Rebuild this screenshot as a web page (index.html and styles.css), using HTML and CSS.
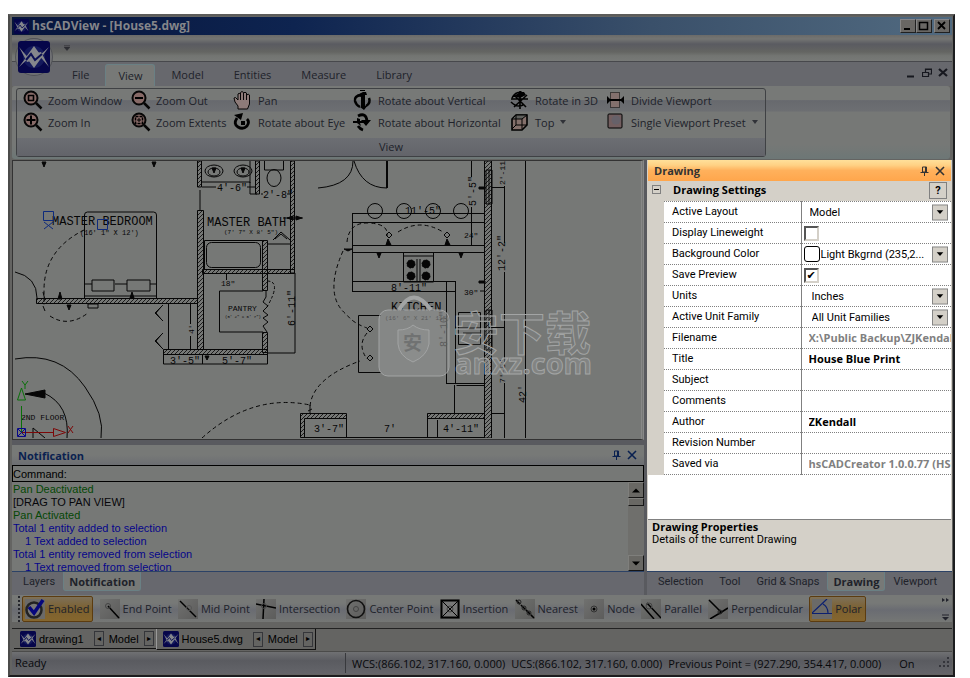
FILE: index.html
```html
<!DOCTYPE html>
<html lang="en">
<head>
  <meta charset="UTF-8">
  <meta name="viewport" content="width=device-width, initial-scale=1.0">
  <title>hsCADView - [House5.dwg]</title>
  <link rel="stylesheet" href="styles.css">
</head>
<body>
  <!-- Shared icons -->
  <svg class="defs" width="0" height="0">
    <symbol id="logo" viewBox="0 0 32 32">
      <rect width="32" height="32" rx="3" fill="#06064a"/>
      <circle cx="16" cy="16" r="11" fill="#14195c"/>
      <path d="M16 5l8 11-8 11-8-11zM1 26L12 11v5zM31 6L20 21v-5zM1 6l12 14-4 1zM31 26L19 12l4-1z" fill="#85878c"/>
      <path d="M8 19l5-6 4 6 7-6" fill="none" stroke="#0c1054" stroke-width="2"/>
    </symbol>
    <symbol id="lens" viewBox="0 0 20 20">
      <circle cx="8" cy="8" r="6.5" fill="#876a67" stroke="#060606" stroke-width="2"/>
      <path d="M13 13l5.500 5.500" stroke="#060606" stroke-width="2.500"/>
    </symbol>
    <symbol id="pin" viewBox="0 0 10 10">
      <path d="M3.500 1h4v5h-4zM6.500 1v5M1.500 6.500h8M5.500 6v4" fill="none" stroke="currentColor"/>
    </symbol>
    <symbol id="cross" viewBox="0 0 10 10">
      <path d="M1 1l8 8M9 1L1 9" stroke="currentColor" stroke-width="1.600"/>
    </symbol>
    <symbol id="down" viewBox="0 0 17 17">
      <rect x=".5" y=".5" width="16" height="16" fill="#d4d0c8" stroke="#808080"/>
      <path d="M5 6h7l-3.500 4z" fill="#000"/>
    </symbol>
  </svg>

  <div class="window">
    <header class="titlebar">
      <svg class="title-logo"><use href="#logo"/></svg>
      <h1>hsCADView - [House5.dwg]</h1>
      <button class="win-btn" aria-label="Minimize"><svg width="12" height="10"><path d="M2 8h6" stroke="#000" stroke-width="2"/></svg></button>
      <button class="win-btn" aria-label="Maximize"><svg width="12" height="10"><path d="M1.500 1.500h8v7h-8zM1 1.500h9" fill="none" stroke="#000" stroke-width="1.500"/></svg></button>
      <button class="win-btn last" aria-label="Close"><svg width="12" height="10"><path d="M2 1l7 7M9 1L2 8" stroke="#000" stroke-width="1.800"/></svg></button>
    </header>

    <div class="quick">
      <button class="orb" aria-label="Application menu"><svg width="32" height="32"><use href="#logo"/></svg></button>
      <button class="quick-more" aria-label="Customize"><svg width="6" height="6"><path d="M0 .5h6M0 2h6L3 5.500z" stroke="#2c2d33" stroke-width=".5" fill="#2c2d33"/></svg></button>
    </div>

    <nav class="menu">
      <button class="menu-tab">File</button>
      <button class="menu-tab active">View</button>
      <button class="menu-tab">Model</button>
      <button class="menu-tab">Entities</button>
      <button class="menu-tab">Measure</button>
      <button class="menu-tab">Library</button>
      <div class="mdi">
        <button aria-label="Minimize drawing"><svg width="10" height="10"><path d="M1 8.500h7" stroke="#17181f" stroke-width="2"/></svg></button>
        <button aria-label="Restore drawing"><svg width="10" height="10"><path d="M3.500 4V1h6v5H7M3 1.500h6M.5 4.500h6v4h-6z" fill="none" stroke="#17181f" stroke-width="1.200"/></svg></button>
        <button aria-label="Close drawing"><svg width="10" height="10"><path d="M1 1l8 7M9 1L1 8" stroke="#17181f" stroke-width="2.200"/></svg></button>
      </div>
    </nav>

    <section class="ribbon">
      <div class="group">
        <div class="tools">
          <button class="tool"><svg viewBox="0 0 20 20"><use href="#lens"/><path d="M5.500 5.500h5v5h-5z" fill="none" stroke="#000" stroke-width="1.600"/></svg>Zoom Window</button>
          <button class="tool"><svg viewBox="0 0 20 20"><use href="#lens"/><path d="M4 8h8" stroke="#000" stroke-width="2"/></svg>Zoom Out</button>
          <button class="tool"><svg viewBox="0 0 20 20"><path d="M5 19v-3l-3-4-1-4 1.500-.5L5 10V4q1-1.500 2.500 0V2.500q1.500-2 3 0V3q1.500-1.500 3 0v2q2-1.500 3 0v9l-2 5z" fill="#8d7b79" stroke="#050505"/><path d="M7.500 4v6M10.500 3v7M13.500 5v5" stroke="#050505"/></svg>Pan</button>
          <button class="tool"><svg viewBox="0 0 20 20"><path d="M8 5q-7 1-6 6 1 4 5 6M16 8q2 5-3 8" fill="none" stroke="#000" stroke-width="2.500"/><path d="M7 0h5v1H7zM4 5l6-3h3l1 3h-2v11l3-1-4 5-4-3h1V7z"/></svg>Rotate about Vertical</button>
          <button class="tool"><svg viewBox="0 0 20 20"><path d="M2 8q3-6 9-6l2 2M1 12q6 6 12 3M1 9h17M10 1v18M4 17L17 5M4 5l12 12" fill="none" stroke="#000" stroke-width="1.600"/><path d="M4 6l6-4h4l2 3-6 3z"/></svg>Rotate in 3D</button>
          <button class="tool"><svg viewBox="0 0 20 20"><path d="M4.500 2.500h9v15h-9z" fill="#83706d" stroke="#000" stroke-dasharray="1 1"/><path d="M1 10h17" stroke="#000" stroke-width="2"/><path d="M1 6l4 4-4 4zM18 6l-4 4 4 4z"/></svg>Divide Viewport</button>
          <button class="tool"><svg viewBox="0 0 20 20"><use href="#lens"/><path d="M3.500 8h9M8 3.500v9" stroke="#000" stroke-width="2"/></svg>Zoom In</button>
          <button class="tool"><svg viewBox="0 0 20 20"><use href="#lens"/><path d="M4.500 4.500h7v7h-7z" fill="none" stroke="#000" stroke-width="1.500" stroke-dasharray="3 1"/><path d="M8 6v4M6 8h4" stroke="#000"/></svg>Zoom Extents</button>
          <button class="tool"><svg viewBox="0 0 20 20"><path d="M4 6q-4 6 1 9 5 3 9-1 3-4 0-7" fill="none" stroke="#000" stroke-width="2.800"/><path d="M1 3l9-2-2 7zM8 9h4v4H8z"/></svg>Rotate about Eye</button>
          <button class="tool"><svg viewBox="0 0 20 20"><path d="M5 4q8-4 9 5M5 14q2 3 5 4" fill="none" stroke="#000" stroke-width="2.800"/><path d="M8 8h10l-5 6zM0 9h4V6l3 1v2h4v2H7l1 3-4-3H0z"/></svg>Rotate about Horizontal</button>
          <button class="tool"><svg viewBox="0 0 20 20"><path d="M2 7l4-4h11v10l-5 5H2z" fill="#84706b" stroke="#000" stroke-width="1.600"/><path d="M2 7l4-4h11l-5 4z" fill="#5f605d" stroke="#000"/><path d="M12 7v10M6 3v10h11M6 13l-4 4" fill="none" stroke="#000"/></svg>Top<i class="caret"></i></button>
          <button class="tool"><svg viewBox="0 0 20 20"><rect x="2" y="2" width="14" height="14" rx="1" fill="#735f60" stroke="#000"/><circle cx="10" cy="8" r="4.500" fill="#666169"/></svg>Single Viewport Preset<i class="caret"></i></button>
        </div>
        <div class="group-name">View</div>
      </div>
    </section>

    <main class="work">
      <section class="left">
        <div class="canvas">
          <svg viewBox="12 161 632 277" preserveAspectRatio="xMinYMin slice" fill="none" stroke="#060606" class="plan">
            <defs>
              <pattern id="hatch" width="4" height="4" patternUnits="userSpaceOnUse">
                <path d="M0 4L4 0M-1 1l2-2M3 5l2-2" stroke="#060606" stroke-width=".8"/>
              </pattern>
            </defs>

            <!-- Master bedroom -->
            <path d="M83.500 298V215q0-3 3-3h66q3 0 3 3v83M84 284h7M114 284h12M149 284h6M84 296h72M91 280h22v11H91zM126 280h23v11h-23z"/>
            <path d="M83 230q-40 20-40 60v15M49 316q18 12 38-3" stroke-dasharray="4 3"/>
            <path d="M14 272q22 5 22 26M87 304h10v4H87z"/>
            <path d="M41 162l2 5 2-5zM151 162l2 5 2-5zM57 299l2-7 2 7zM66 305l2 5 2-5zM42 292l2 8M42 306l2 5M129 298l2-6 2 6z" fill="#060606"/>

            <!-- Walls -->
            <g fill="url(#hatch)">
              <path d="M35.500 298.500h161v5h-161zM196.500 161v26h4v-26zM196.500 210.500h6v139h-6zM201.500 269.500h92v4h-92zM289.500 161v112h4V161zM254.500 161v33h4v-33zM261.500 240.500h5v50h-5zM162.500 349.500h104v5h-104zM261.500 332.500h5v20h-5z"/>
              <path d="M483.500 161v277h7V161zM299.500 413.500h46v5h-42v19h-4zM426.500 413.500h57v5h-57z"/>
            </g>

            <!-- Bath, closet and pantry -->
            <path d="M199 190v20M203.500 240.500h58v29h-58z"/>
            <rect x="205.500" y="242.500" width="54" height="25" rx="5"/>
            <ellipse cx="213" cy="171" rx="9" ry="6"/><ellipse cx="213" cy="172" rx="6" ry="4"/>
            <ellipse cx="242" cy="171" rx="9" ry="6"/><ellipse cx="242" cy="172" rx="6" ry="4"/>
            <path d="M201 187h14M246 187h8M201 182h48v12h7M249 161v22M263.500 161v9h19v-9"/>
            <ellipse cx="273" cy="178" rx="7" ry="8.500"/>
            <path d="M260 194h2M286 194h4M267 244h22M272 240l8-8 9 8M274 239l6-5 6 5M282 218h20"/>
            <path d="M286 218l6-2v4zM301 218l-6-2v4zM211 168l2 5 2-5zM240 168l2 5 2-5z" fill="#060606"/>
            <path d="M167.500 304v46M189.500 304v20M189.500 336v14M162 305l-8 8 8 8M160 307l-5 6 5 6M162 333l-8 8 8 8M160 335l-5 6 5 6"/>
            <path d="M262 291h-43.500v41H262M225.500 274v6M294 273v80M267 353h27M162.500 354v10h104v-10M201.500 354v10"/>
            <path d="M265 291v6l-3 5 5 4-5 5 5 4-5 3 5 4-5 4 4 6"/>
            <path d="M266 281q15 0 0 26" stroke-dasharray="3 2"/>
            <path d="M204 356l2 4 2-4z" fill="#060606"/>

            <!-- Stairs -->
            <path d="M14 359q45-8 70 28 20 28 16 51M43 393q26 12 23 45M32 438v-10l12 10"/>
            <path d="M24 394l20-4v8z" fill="#060606"/>
            <path d="M201 438q50-45 108-33" stroke-dasharray="4 3"/>
            <path d="M309 406q3-28 50-45" stroke-dasharray="4 3"/>
            <path d="M309 405v8M307 411l4-2"/>

            <!-- Kitchen -->
            <path d="M317 188q35-3 35-27M353 161q8 27 33 27v-27" /><path d="M386 161v27" stroke-width="2"/>
            <path d="M351.500 213v79M352 213.500h132M352 222.500h132M352 245.500h132M352 252.500h132M352 281.500h102M352 291.500h102M470.500 161v16M470.500 207v38M445.500 281v103M454.500 281v103M445 383.500h39M479 291h4"/>
            <circle cx="374" cy="211" r="7.500"/><circle cx="403" cy="211" r="7.500"/><circle cx="432" cy="211" r="7.500"/><circle cx="460" cy="211" r="7.500"/>
            <path d="M402.500 252v30h30v-30M403 256h29M416 259v22M419 259v22"/>
            <g fill="#060606" stroke-dasharray="2 1"><circle cx="410" cy="264" r="4"/><circle cx="425" cy="264" r="4"/><circle cx="410" cy="276" r="4"/><circle cx="425" cy="276" r="4"/></g>
            <path d="M346 242q2-20 22-19t18 13M397 232q22-14 45 0M342 251q-20 45 4 64 6 8 20 13M366 333q-10 12 0 26" stroke-dasharray="4 3"/>
            <path d="M388 232l3 3-3 3-3-3zM446 232l3 3-3 3-3-3zM369 326l3 3-3 3-3-3zM369 355l3 3-3 3-3-3zM380 315.500h-22.500v57H380"/>
            <path d="M385 245l2-6 3 6zM444 245l2-6 3 6zM376 253l2 5 2-5zM458 253l2 5 2-5zM343 249h8l-4 2zM478 187h6v2h-6zM478 281h6v2h-6z" fill="#060606"/>
            <path d="M457.500 312.500h22v32h-22zM458 328h22M462 333h17M453.500 385v28M455.500 385.500h28v27"/>
            <path d="M485 170v34h6v-34zM488 170v34M485 310v40h6v-40zM488 310v40"/>
            <path d="M503.500 186v57M503.500 272v90M503.500 383v55M524.500 161v277M491 187.500h13M491 327.500h13M491 413.500h13M302 437.500h182M345.500 414v23M426.500 414v23M436.500 420v18"/>

            <!-- Room names and dimensions -->
            <g class="cad">
              <text x="51" y="225" class="room">MASTER BEDROOM</text>
              <text x="79" y="235">(16' 1" X 12')</text>
              <text x="206" y="226" class="room">MASTER BATH</text>
              <text x="223" y="234" class="tiny">(7' 7" X 8' 5")</text>
              <text x="390" y="311" class="room">KITCHEN</text>
              <text x="384" y="320" class="tiny">(16' 6" X 21' 11")</text>
              <text x="227" y="311" class="mid">PANTRY</text>
              <text x="224" y="318" class="small">(5' 2" X 6' 7")</text>
              <text x="20" y="420" class="mid">2ND FLOOR</text>
              <text x="216" y="191" class="dim">4'-6"</text>
              <text x="262" y="198" class="dim">2'-8"</text>
              <text x="220" y="286" class="mid">18"</text>
              <text x="169" y="364" class="dim">3'-5"</text>
              <text x="221" y="364" class="dim">5'-7"</text>
              <text x="313" y="432" class="dim">3'-7"</text>
              <text x="383" y="432" class="dim">7'</text>
              <text x="442" y="432" class="dim">4'-11"</text>
              <text x="404" y="214" class="dim">11'-5"</text>
              <text x="463" y="238" class="mid">24"</text>
              <text x="390" y="291" class="dim">8'-11"</text>
              <text x="463" y="295" class="mid">30"</text>
              <text transform="translate(294 326) rotate(-90)" class="dim">6'-11"</text>
              <text transform="translate(475 206) rotate(-90)" class="dim">5'-5"</text>
              <text transform="translate(504 185) rotate(-90)" class="mid">2'-11</text>
              <text transform="translate(504 271) rotate(-90)" class="dim">12'-2"</text>
              <text transform="translate(446 347) rotate(-90)" class="dim">8'-10"</text>
              <text transform="translate(504 383) rotate(-90)" class="mid">7'-5"</text>
              <text transform="translate(525 403) rotate(-90)" class="dim">42'</text>
              <text transform="translate(193 334) rotate(-90)" class="mid">4'</text>
            </g>

            <!-- Grips and axes -->
            <path d="M42.500 211.500h10v9h-10zM96.500 219.500h10v10h-10zM43 222l9 7M52 222l-9 7" stroke="#0d2a7c"/>
            <path d="M20.500 432v-26M20.500 388l-4 12h8zM21 381l3 4 3-4M24 385v4" stroke="#087008"/>
            <path d="M21 432.500h31M52.500 428.500l12 4-12 4zM67 426l5 7M72 426l-5 7" stroke="#7c0808"/>
            <path d="M16.500 428.500h8v8h-8zM17 429l7 7M24 429l-7 7" stroke="#080888"/>

            <!-- Watermark -->
            <g class="mark">
              <path d="M398 310q14-25 32 0" stroke-width="4"/>
              <rect x="378" y="310" width="70" height="66" rx="9"/>
              <path d="M397 330q10 0 15-5 6 5 16 5v14q-2 12-16 18-14-6-15-18z"/>
              <text x="402" y="350" class="seal">安</text>
              <text x="452" y="350" class="cjk">安下载</text>
              <text x="454" y="374" class="site">anxz.com</text>
            </g>
          </svg>
        </div>

        <div class="notice">
          <div class="panel-head">
            <h2>Notification</h2>
            <button aria-label="Pin"><svg width="10" height="10"><use href="#pin"/></svg></button>
            <button aria-label="Close"><svg width="10" height="10"><use href="#cross"/></svg></button>
          </div>
          <div class="command">
            <label for="command">Command:</label>
            <input id="command" type="text">
          </div>
          <div class="log">
            <div class="lines">
              <p class="ok">Pan Deactivated</p>
              <p>[DRAG TO PAN VIEW]</p>
              <p class="ok">Pan Activated</p>
              <p class="info">Total 1 entity added to selection</p>
              <p class="info sub">1 Text added to selection</p>
              <p class="info">Total 1 entity removed from selection</p>
              <p class="info sub">1 Text removed from selection</p>
            </div>
            <div class="scroll">
              <button aria-label="Scroll up"><svg width="8" height="5"><path d="M0 4.500h8L4 .5z"/></svg></button>
              <div class="thumb"></div>
              <button class="bottom" aria-label="Scroll down"><svg width="8" height="5"><path d="M0 .5h8L4 4.500z"/></svg></button>
            </div>
          </div>
        </div>
        <div class="tabs">
          <button>Layers</button>
          <button class="active">Notification</button>
        </div>
      </section>

      <section class="right">
        <div class="props">
          <div class="props-head">
            <h2>Drawing</h2>
            <button aria-label="Pin"><svg width="10" height="10"><use href="#pin"/></svg></button>
            <button aria-label="Close"><svg width="10" height="10"><use href="#cross"/></svg></button>
          </div>
          <div class="settings-head">
            <button class="collapse" aria-label="Collapse"><svg width="9" height="9"><rect x=".5" y=".5" width="8" height="8" fill="none" stroke="#808080"/><path d="M2 4.500h5" stroke="#000"/></svg></button>
            <h3>Drawing Settings</h3>
            <button class="help">?</button>
          </div>
          <table class="grid">
            <tr><th><label for="layout">Active Layout</label></th><td><div class="combo"><select id="layout"><option>Model</option></select><svg><use href="#down"/></svg></div></td></tr>
            <tr><th><label for="weight">Display Lineweight</label></th><td><input type="checkbox" id="weight"></td></tr>
            <tr><th><label for="color">Background Color</label></th><td><div class="combo"><span class="swatch"></span><select id="color" class="tight"><option>Light Bkgrnd (235,2...</option></select><svg><use href="#down"/></svg></div></td></tr>
            <tr><th><label for="preview">Save Preview</label></th><td><input type="checkbox" id="preview" checked></td></tr>
            <tr><th><label for="units">Units</label></th><td><div class="combo"><select id="units" class="wide"><option>Inches</option></select><svg><use href="#down"/></svg></div></td></tr>
            <tr><th><label for="family">Active Unit Family</label></th><td><div class="combo"><select id="family" class="wide"><option>All Unit Families</option></select><svg><use href="#down"/></svg></div></td></tr>
            <tr><th><label for="file">Filename</label></th><td><input type="text" id="file" class="locked" readonly value="X:\Public Backup\ZJKendall"></td></tr>
            <tr><th><label for="title">Title</label></th><td><input type="text" id="title" value="House Blue Print"></td></tr>
            <tr><th><label for="subject">Subject</label></th><td><input type="text" id="subject"></td></tr>
            <tr><th><label for="comments">Comments</label></th><td><input type="text" id="comments"></td></tr>
            <tr><th><label for="author">Author</label></th><td><input type="text" id="author" value="ZKendall"></td></tr>
            <tr><th><label for="revision">Revision Number</label></th><td><input type="text" id="revision"></td></tr>
            <tr><th><label for="saved">Saved via</label></th><td><input type="text" id="saved" class="locked" readonly value="hsCADCreator 1.0.0.77 (HSCAD)"></td></tr>
          </table>
          <div class="about">
            <h3>Drawing Properties</h3>
            <p>Details of the current Drawing</p>
          </div>
        </div>
        <div class="tabs spread">
          <button>Selection</button>
          <button>Tool</button>
          <button>Grid &amp; Snaps</button>
          <button class="active">Drawing</button>
          <button>Viewport</button>
        </div>
      </section>
    </main>

    <div class="snaps">
      <div class="snap-list">
        <button class="snap on"><svg viewBox="0 0 20 20"><circle cx="9" cy="11" r="7.500" fill="#777" stroke="#222" stroke-width="2.500"/><path d="M4 8l5 6L18 1" fill="none" stroke="#06067c" stroke-width="3.500"/></svg>Enabled</button>
        <button class="snap"><svg viewBox="0 0 20 20"><path d="M8 7l11 12" stroke="#000" stroke-width="1.500"/><circle cx="8" cy="7" r="2.500" fill="none" stroke="#444"/></svg>End Point</button>
        <button class="snap"><svg viewBox="0 0 20 20"><path d="M2 2l16 16" stroke="#000" stroke-width="1.500"/><circle cx="11" cy="9" r="2.500" fill="none" stroke="#555"/></svg>Mid Point</button>
        <button class="snap"><svg viewBox="0 0 20 20"><path d="M8 0L7 20M0 5l20 4" stroke="#000" stroke-width="1.500"/><circle cx="8" cy="7" r="2.500" fill="none" stroke="#444"/></svg>Intersection</button>
        <button class="snap"><svg viewBox="0 0 20 20"><circle cx="10" cy="10" r="8.500" fill="none" stroke="#111" stroke-width="1.600"/><circle cx="10" cy="10" r="2.500" fill="none" stroke="#444"/></svg>Center Point</button>
        <button class="snap"><svg viewBox="0 0 20 20"><path d="M1.500 1.500h17v17h-17z" fill="#777" stroke="#000" stroke-width="2"/><path d="M2 2l16 16M18 2L2 18" stroke="#000"/><circle cx="10" cy="10" r="3" fill="none" stroke="#444"/></svg>Insertion</button>
        <button class="snap"><svg viewBox="0 0 20 20"><path d="M1 1l18 18" stroke="#000" stroke-width="1.500" stroke-dasharray="6 1"/><circle cx="4" cy="3" r="2" fill="none" stroke="#222"/><circle cx="9" cy="9" r="2" fill="none" stroke="#222"/><circle cx="14" cy="14" r="2" fill="none" stroke="#222"/></svg>Nearest</button>
        <button class="snap"><svg viewBox="0 0 20 20"><circle cx="10" cy="10" r="3" fill="none" stroke="#333"/><circle cx="10" cy="10" r="1.500" fill="#000"/></svg>Node</button>
        <button class="snap"><svg viewBox="0 0 20 20"><path d="M0 5l13 15M6 4l14 15" stroke="#000" stroke-width="1.500"/><circle cx="8" cy="7" r="3" fill="none" stroke="#444"/></svg>Parallel</button>
        <button class="snap"><svg viewBox="0 0 20 20"><path d="M1 1l13 13M20 9l-8 5L2 20" stroke="#000" stroke-width="1.500"/><circle cx="12" cy="13" r="2" fill="none" stroke="#222"/></svg>Perpendicular</button>
        <button class="snap on"><svg viewBox="0 0 20 20"><path d="M0 14.500h20M0 14L15 0M11 5q5 3 5 9" fill="none" stroke="#0c2070" stroke-width="1.200"/></svg>Polar</button>
      </div>
      <button class="snap-more" aria-label="More snaps"><svg width="8" height="24"><path d="M0 1l3 2-3 2zM4 1l3 2-3 2zM0 17.500h7v1H0zM0 20h7l-3.500 3.500z" fill="#22232c"/></svg></button>
    </div>

    <div class="docs">
      <div class="doc">
        <svg><use href="#logo"/></svg><span>drawing1</span>
        <button aria-label="Previous">&#9666;</button><span class="model">Model</span><button aria-label="Next">&#9656;</button>
      </div>
      <div class="doc current">
        <svg><use href="#logo"/></svg><span>House5.dwg</span>
        <button aria-label="Previous">&#9666;</button><span class="model">Model</span><button aria-label="Next">&#9656;</button>
      </div>
    </div>

    <footer class="status">
      <span class="ready">Ready</span>
      <span>WCS:(866.102, 317.160, 0.000)</span>
      <span>UCS:(866.102, 317.160, 0.000)</span>
      <span>Previous Point = (927.290, 354.417, 0.000)</span>
      <span class="on-flag">On</span>
      <svg class="grip" width="12" height="12"><path d="M9 1h2M5 5h2M9 5h2M1 9h2M5 9h2M9 9h2" stroke="#34353b" stroke-width="2"/></svg>
    </footer>
  </div>
</body>
</html>
```

FILE: styles.css
```css
* {
  box-sizing: border-box;
}
body {
  margin: 0;
  background: #fff;
  font-family: "Open Sans", sans-serif;
  font-size: 11px;
  color: #20222a;
}
h1, h2, h3, p {
  margin: 0;
  font-size: inherit;
}
button {
  font: inherit;
  color: inherit;
  background: none;
  border: none;
  padding: 0;
  white-space: nowrap;
}
svg {
  display: block;
  flex: none;
}
.defs {
  position: absolute;
}
.window {
  display: flex;
  flex-direction: column;
  min-height: calc(100vh - 15px);
  margin: 14px 15px 1px 8px;
  padding: 1px 1px 1px 2px;
  border: 2px solid #1c1d1f;
  border-top-color: #5c5c5a;
  border-left-color: #4b4b4a;
  background: #646462;
}

/* Title bar */
.titlebar {
  display: flex;
  align-items: center;
  height: 18px;
  padding: 0 2px;
  background: linear-gradient(90deg, #07153c, #0e2450 30%, #3a506a 68%, #516a80);
}
.title-logo {
  width: 15px;
  height: 15px;
}
.titlebar h1 {
  flex: 1;
  margin-left: 3px;
  font-size: 12px;
  line-height: 18px;
  color: #85868a;
}
.win-btn {
  display: flex;
  align-items: center;
  justify-content: center;
  width: 16px;
  height: 14px;
  background: #696764;
  border: 1px solid;
  border-color: #85858a #202020 #202020 #858585;
}
.win-btn.last {
  margin-left: 2px;
}

/* Quick access strip */
.quick {
  position: relative;
  height: 27px;
  border-bottom: 1px solid #47484c;
  background: linear-gradient(#6b6b69, #747573 15%, #5a5b61 35%, #646562 65%, #737572 80%, #777977);
}
.orb {
  position: absolute;
  z-index: 1;
  top: 4px;
  left: 4px;
  padding: 2px;
  border-radius: 50%;
  background: #6f7073;
  box-shadow: 0 0 0 1px #505257;
}
.quick-more {
  display: block;
  margin-left: 52px;
  padding: 10px 0;
}

/* Ribbon */
.menu {
  display: flex;
  align-items: flex-end;
  height: 24px;
  padding-left: 46px;
  background: #67686d;
}
.menu-tab {
  height: 22px;
  margin-right: 2px;
  padding: 0 14px;
  line-height: 22px;
}
.menu-tab.active {
  padding: 0 12px;
  border: 1px solid #6a8084;
  border-bottom: none;
  border-radius: 3px 3px 0 0;
  line-height: 21px;
  background: #777977;
}
.mdi {
  display: flex;
  gap: 6px;
  margin-left: auto;
  padding: 0 4px 8px 0;
}
.ribbon {
  margin-right: 2px;
  padding: 2px 4px;
  border-radius: 3px;
  background: linear-gradient(#777977 19%, #67696e 20%, #6d6f72 34%, #767876 36%, #767876 80%, #6d7776);
}
.group {
  width: 750px;
  border: 1px solid #3f4144;
  border-radius: 3px;
}
.tools {
  display: grid;
  grid-template-columns: 108px 102px 120px 157px 96px 160px;
  grid-auto-rows: 22px;
  padding-left: 6px;
}
.tool {
  display: flex;
  align-items: center;
  gap: 5px;
}
.tool svg {
  width: 20px;
  height: 20px;
}
.caret {
  margin-left: 1px;
  border: 3px solid transparent;
  border-top: 4px solid #303238;
  border-bottom: none;
}
.group-name {
  margin-top: 5px;
  line-height: 18px;
  text-align: center;
  background: linear-gradient(#6c6e73, #63646a);
}

/* Work area */
.work {
  display: grid;
  grid-template-columns: 1fr 305px;
  gap: 3px;
  flex: 1;
  margin-top: 1px;
  background: #595a5f;
}
.left, .right {
  display: flex;
  flex-direction: column;
}
.canvas {
  flex: 1;
  display: flex;
  min-height: 278px;
  border: 1px solid #333;
  border-right: 3px double #888;
  background: #767876;
}
.plan {
  flex: 1;
  width: 100%;
  height: 277px;
}
.cad {
  fill: #060606;
  stroke: none;
  font: 7px "Liberation Mono", monospace;
}
.cad .room {
  font-size: 12px;
}
.cad .mid {
  font-size: 8px;
}
.cad .tiny {
  font-size: 6px;
}
.cad .small {
  font-size: 4px;
}
.cad .dim {
  font-size: 10px;
}
.mark {
  fill: #8f9191;
  fill-opacity: 0.6;
  stroke: #a2a4a4;
  font-family: "Noto Sans CJK SC", sans-serif;
  font-weight: bold;
}
.mark path:first-child {
  fill: none;
}
.mark .seal {
  font-size: 19px;
  fill: #5f6161;
  stroke: none;
}
.mark .cjk {
  font-size: 46px;
  fill-opacity: 0.2;
}
.mark .site {
  font: bold 29px "Open Sans", sans-serif;
  fill-opacity: 0.5;
}

/* Notification panel */
.notice {
  margin-top: 5px;
}
.panel-head {
  display: flex;
  align-items: center;
  gap: 6px;
  height: 20px;
  padding: 0 7px 0 6px;
  color: #0a2150;
  background: linear-gradient(#777977 50%, #6c6e72);
}
.panel-head h2 {
  flex: 1;
}
.command, .log {
  font-family: "Liberation Sans", sans-serif;
  background: #767876;
}
.command {
  display: flex;
  align-items: center;
  height: 17px;
  border: 1px solid #000;
  color: #000;
}
.command input {
  flex: 1;
  border: none;
  padding: 0;
  background: none;
}
.log {
  display: flex;
  height: 89px;
  color: #06060a;
}
.lines {
  flex: 1;
  height: 89px;
  padding: 1px 0 0 1px;
  overflow: hidden;
}
.lines p {
  line-height: 13px;
}
.lines .ok {
  color: #054705;
}
.lines .info {
  color: #06068a;
}
.lines .sub {
  padding-left: 12px;
}
.scroll {
  display: flex;
  flex-direction: column;
  width: 16px;
  background: #6f6f6c;
}
.scroll button, .thumb {
  display: flex;
  align-items: center;
  justify-content: center;
  height: 16px;
  border: 1px solid;
  border-color: #7f7f7c #161616 #161616 #7f7f7c;
  background: #696864;
}
.scroll .thumb {
  height: 8px;
}
.scroll .bottom {
  margin-top: auto;
}
.tabs {
  display: flex;
  height: 24px;
  padding: 0 0 4px 3px;
  border-top: 1px solid #2c4266;
  font-family: Roboto, sans-serif;
  background: #67686e;
}
.tabs button {
  padding: 0 8px;
}
.tabs .active {
  padding: 0 5px;
  border: 1px solid #6a8084;
  border-top: none;
  border-radius: 0 0 3px 3px;
  font: bold 11px "Open Sans", sans-serif;
  background: #777977;
}
.spread {
  justify-content: space-between;
  padding-right: 8px;
}

/* Drawing properties */
.props {
  flex: 1;
  display: flex;
  flex-direction: column;
  border: 1px solid #d4d0c8;
  border-width: 0 1px;
  font-family: Roboto, sans-serif;
  color: #000;
  background: #fff;
}
.props h2, .props h3 {
  font-family: "Open Sans", sans-serif;
}
.props-head {
  display: flex;
  align-items: center;
  gap: 6px;
  height: 21px;
  padding: 0 6px;
  color: #333;
  background: linear-gradient(#ffe09a, #ffd184 25%, #ffb15c 50%, #ffa64c);
}
.props-head h2 {
  flex: 1;
}
.settings-head {
  display: flex;
  align-items: flex-start;
  height: 20px;
  padding: 1px 4px 0;
  background: #d4d0c8;
}
.collapse {
  margin-top: 3px;
}
.settings-head h3 {
  flex: 1;
  margin-left: 12px;
  line-height: 16px;
}
.help {
  width: 18px;
  height: 17px;
  border: 1px solid #808080;
  font-weight: bold;
  line-height: 15px;
}
.grid {
  width: 100%;
  table-layout: fixed;
  border-collapse: collapse;
  border-left: 16px solid #d4d0c8;
}
.grid th, .grid td {
  height: 21px;
  padding: 0;
  border-top: 1px dotted #808080;
  border-bottom: 1px dotted #808080;
}
.grid th {
  width: 145px;
  padding: 0 0 2px 8px;
  border-right: 1px solid #808080;
  font-weight: normal;
  text-align: left;
}
.grid td {
  overflow: hidden;
}
.combo {
  display: flex;
  align-items: center;
  padding-right: 3px;
}
.combo svg {
  width: 16px;
  height: 17px;
}
.combo select {
  flex: 1;
  min-width: 0;
  appearance: none;
  border: none;
  padding: 0 0 0 8px;
  font: inherit;
  background: #fff;
}
.combo .wide {
  padding-left: 10px;
}
.combo .tight {
  padding-left: 1px;
}
.swatch {
  width: 16px;
  height: 16px;
  margin-left: 2px;
  border: 1px solid #000;
  border-radius: 3px;
}
.grid input[type="text"] {
  display: block;
  width: 100%;
  padding: 0 0 1px 7px;
  border: none;
  font: bold 11px "Open Sans", sans-serif;
  background: none;
}
.grid .locked {
  color: #808080;
}
.grid input[type="checkbox"] {
  display: block;
  appearance: none;
  width: 15px;
  height: 15px;
  margin: 0 0 0 2px;
  border: 2px solid;
  border-color: #555 #d4d0c8 #d4d0c8 #555;
}
.grid input[type="checkbox"]:checked::before {
  content: "✔";
  display: block;
  font: 11px/11px "DejaVu Sans", sans-serif;
  text-align: center;
}
.about {
  margin-top: auto;
  height: 52px;
  padding: 0 4px;
  border-top: 1px solid #808080;
  line-height: 13px;
  background: #d4d0c8;
}

/* Snap toolbar */
.snaps {
  display: flex;
  align-items: center;
  height: 27px;
  padding: 0 2px 0 6px;
  background: linear-gradient(#777977 30%, #6a6c72 55%, #757775);
}
.snap-list {
  flex: 1;
  display: flex;
  justify-content: space-between;
  max-width: 848px;
  margin-right: auto;
  padding-left: 2px;
  border-left: 2px dotted #25262c;
}
.snap {
  display: flex;
  align-items: center;
  gap: 3px;
  height: 26px;
}
.snap svg {
  width: 20px;
  height: 20px;
  background: linear-gradient(135deg, #70716f, #5c5c5b);
}
.snap.on {
  padding: 0 3px 0 2px;
  border: 1px solid #5c3c10;
  border-radius: 2px;
  background: linear-gradient(#7d7058, #7c602f 50%, #85662e);
}
.snap.on svg {
  background: #6b6a68;
}

/* Open drawings */
.docs {
  display: flex;
  height: 30px;
  padding: 0 0 2px 2px;
  font-family: "Liberation Sans", sans-serif;
  color: #000;
  border-bottom: 1px solid #4b4b4a;
  background: linear-gradient(#646462 6px, #222 6px, #222 7px, #646462 7px);
}
.doc {
  display: flex;
  align-items: center;
  height: 20px;
  margin-top: 7px;
  padding: 0 2px 0 6px;
  border-bottom: 1px solid #111;
}
.doc svg {
  width: 16px;
  height: 16px;
  margin-right: 3px;
}
.doc button {
  width: 10px;
  height: 15px;
  border: 1px solid #35363a;
  font-size: 8px;
  line-height: 12px;
}
.doc span + button {
  margin-left: 10px;
}
.doc .model {
  margin: 0 5px;
}
.doc .model + button {
  margin-left: 0;
}
.doc.current {
  height: 21px;
  border: 1px solid #111;
  border-top: none;
  border-left-color: #999;
}

/* Status bar */
.status {
  display: flex;
  align-items: center;
  gap: 6px;
  height: 22px;
  padding-right: 2px;
  color: #08090c;
  white-space: nowrap;
  background: linear-gradient(#707173, #5a5b60 40%, #64656a);
}
.ready {
  flex: none;
  width: 334px;
  height: 20px;
  padding-left: 3px;
  line-height: 20px;
  border-right: 1px solid #38393d;
}
.on-flag {
  margin-left: 12px;
}
.grip {
  margin-left: auto;
}
```
